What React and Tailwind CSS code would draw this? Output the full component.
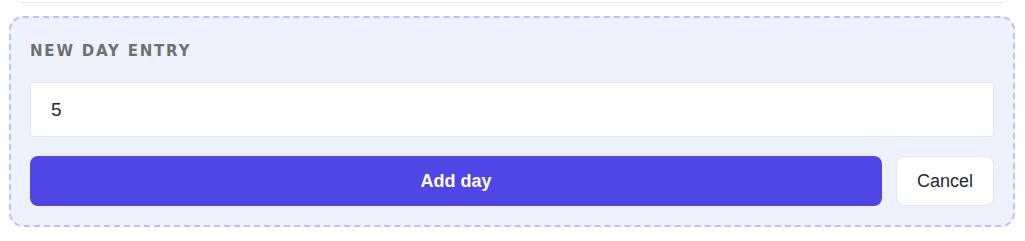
import React, { useState } from "react";

export default function App() {
  const [value, setValue] = useState("5");

  return (
    <div className="w-[1025px] h-[241px] bg-white pl-[9px] pr-[10px] pt-[2px] font-['Liberation_Sans',Arial,sans-serif]">
      <div className="mx-[11px] h-px bg-[#e5e7eb]" />
      <div className="mt-[13px] rounded-[14px] border-2 border-dashed border-[#b9c3fc] bg-[#eef2ff] pl-[19px] pr-[19px] pt-[24px] pb-[19px]">
        <div className="text-[15px] font-bold uppercase tracking-[1.8px] text-[#707070] font-['DejaVu_Sans',sans-serif] leading-[18px]">
          New day entry
        </div>
        <input
          value={value}
          onChange={(e) => setValue(e.target.value)}
          className="mt-[22px] block h-[55px] w-full rounded-[3px] border border-[#e5e7eb] bg-white px-5 text-[19px] text-[#1f2937] outline-none"
        />
        <div className="mt-[19px] flex gap-[14px]">
          <button className="h-[50px] flex-1 rounded-lg bg-[#4f46e5] text-[18px] font-bold text-white">
            Add day
          </button>
          <button className="h-[50px] w-[98px] rounded-lg border border-[#e5e7eb] bg-white text-[18px] text-[#1f2937]">
            Cancel
          </button>
        </div>
      </div>
    </div>
  );
}
